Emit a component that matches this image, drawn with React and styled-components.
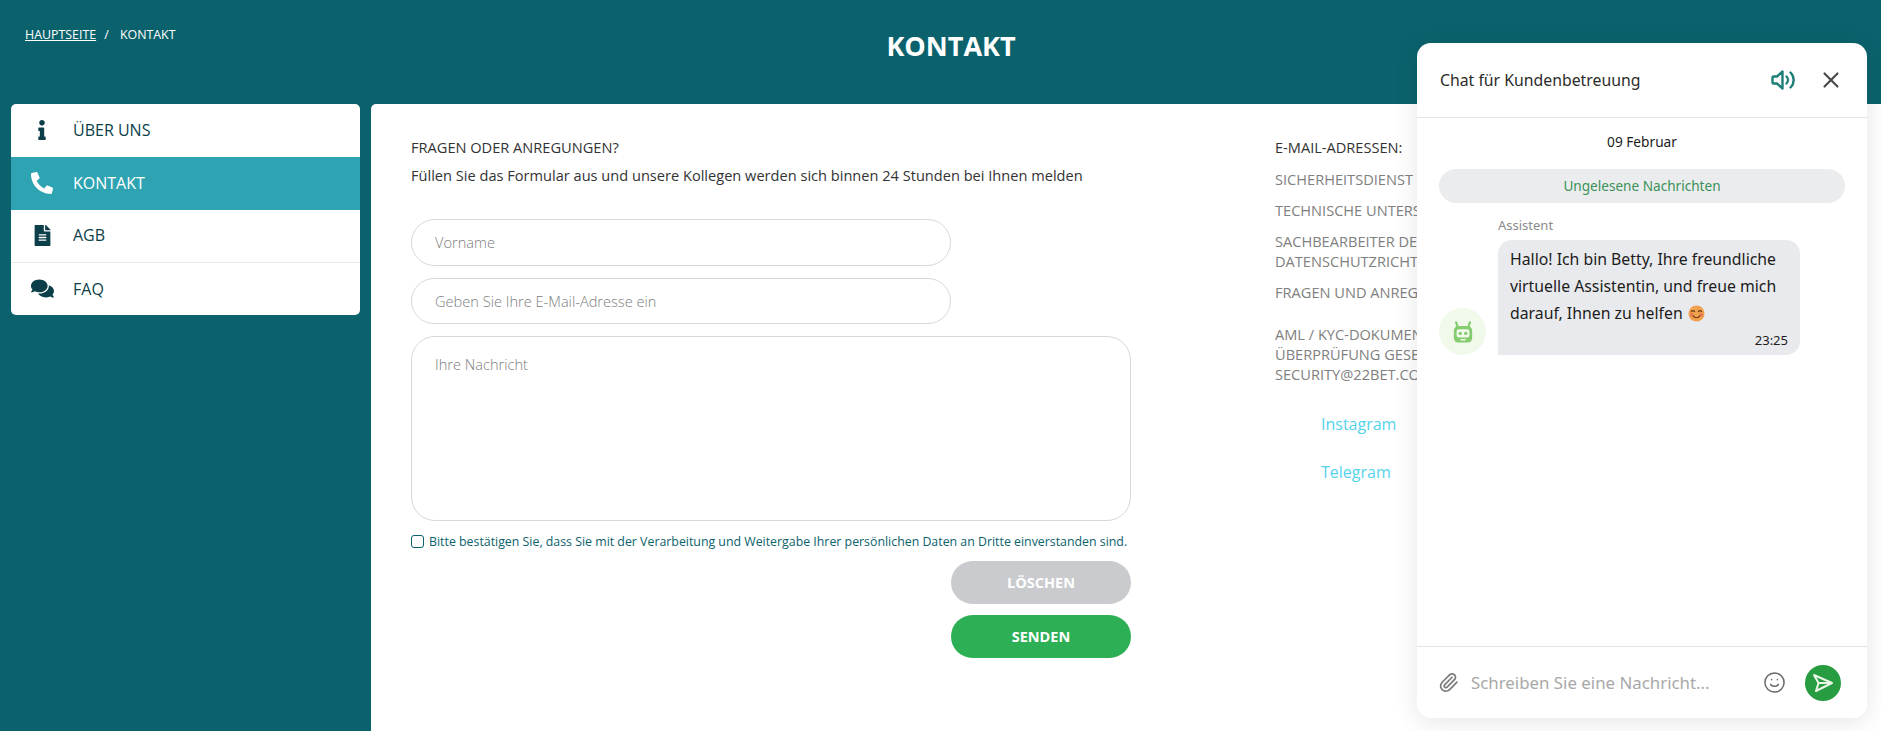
import styled, { createGlobalStyle } from 'styled-components';
import { FaInfo, FaPhone, FaFileAlt, FaComments } from 'react-icons/fa';
import { X, Paperclip, Smile } from 'lucide-react';

const GlobalStyle = createGlobalStyle`
  html, body {
    margin: 0;
    height: 100%;
    overflow: hidden;
    background: #0b626c;
    font-family: "Open Sans", "Liberation Sans", sans-serif;
  }
  * { box-sizing: border-box; }
`;

const Page = styled.div`
  position: relative;
  width: 100%;
  height: 731px;
  overflow: hidden;
  background: #0b626c;
`;

const Header = styled.header`
  display: grid;
  grid-template-columns: 1fr auto 1fr;
  height: 104px;
  padding: 25px 25px 0;
`;

const Crumbs = styled.nav`
  display: flex;
  gap: 8px;
  padding-top: 1px;
  font-size: 12.4px;
  line-height: 18px;
  color: #fff;
`;

const CrumbLink = styled.a`
  color: #fff;
  text-decoration: underline;
`;

const PageTitle = styled.h1`
  margin: 3px 0 0 21px;
  font-size: 27px;
  line-height: 36px;
  font-weight: 700;
  color: #fff;
`;

const Body = styled.div`
  display: flex;
  gap: 11px;
  padding-left: 11px;
  height: 627px;
`;

const SideMenu = styled.ul`
  flex: none;
  width: 349px;
  height: 211px;
  margin: 0;
  padding: 0;
  list-style: none;
  background: #fff;
  border-radius: 5px;
  overflow: hidden;
`;

const MenuItem = styled.li`
  display: flex;
  align-items: center;
  height: 53px;
  padding-bottom: 2px;
  font-size: 16px;
  color: ${p => (p.$active ? '#fff' : '#0c3f4a')};
  background: ${p => (p.$active ? '#2ea4b2' : 'transparent')};
  border-bottom: ${p => (p.$line ? '1px solid #e8e8e8' : 'none')};
`;

const MenuIcon = styled.span`
  display: flex;
  justify-content: center;
  width: 62px;
`;

const Content = styled.main`
  flex: 1;
  display: flex;
  padding: 33px 0 0 40px;
  background: #fff;
  border-radius: 5px 0 0 0;
`;

const FormColumn = styled.form`
  display: flex;
  flex-direction: column;
  flex: none;
  width: 720px;
`;

const FormTitle = styled.div`
  font-size: 14.6px;
  line-height: 20px;
  color: #333;
`;

const FormText = styled.div`
  margin: 8px 0 34px;
  font-size: 14.6px;
  line-height: 20px;
  color: #333;
`;

const TextInput = styled.input`
  display: block;
  width: 540px;
  height: 46.5px;
  margin-bottom: 12px;
  padding: 0 23px;
  border: 1px solid #d8d8d8;
  border-radius: 24px;
  font: 300 14.6px "Open Sans", sans-serif;
  outline: none;
  &::placeholder { color: #7c7c7c; }
`;

const MessageInput = styled.textarea`
  display: block;
  width: 720px;
  height: 185px;
  padding: 17px 23px;
  border: 1px solid #d8d8d8;
  border-radius: 24px;
  font: 300 14.6px/20px "Open Sans", sans-serif;
  outline: none;
  resize: none;
  &::placeholder { color: #7c7c7c; }
`;

const Consent = styled.label`
  display: flex;
  align-items: center;
  gap: 5px;
  margin: 11px 0 11px;
  height: 18px;
  font-size: 12.35px;
  white-space: nowrap;
  color: #0b626c;
`;

const ConsentBox = styled.span`
  flex: none;
  width: 13px;
  height: 13px;
  border: 1px solid #0b626c;
  border-radius: 3px;
`;

const PillButton = styled.button`
  display: block;
  align-self: flex-end;
  width: 180px;
  height: 43px;
  margin-bottom: 11px;
  border: none;
  border-radius: 22px;
  font: 700 14.5px "Open Sans", sans-serif;
  color: #fff;
  background: ${p => (p.$primary ? '#2daf56' : '#c9cbce')};
`;

const InfoColumn = styled.aside`
  flex: none;
  width: 500px;
  margin-left: 144px;
  font-size: 14.6px;
  color: #808080;
`;

const InfoTitle = styled.div`
  margin-bottom: 12px;
  line-height: 20px;
  color: #333;
`;

const InfoLine = styled.div`
  margin-bottom: ${p => p.$gap || 11}px;
  line-height: 20px;
`;

const SocialLink = styled.a`
  display: block;
  margin: 0 0 25px 46px;
  font-size: 16px;
  line-height: 23px;
  color: #55d3ec;
`;

const ChatPanel = styled.section`
  position: absolute;
  top: 43px;
  left: 1417px;
  display: flex;
  flex-direction: column;
  width: 450px;
  height: 675px;
  background: #fff;
  border-radius: 14px;
  box-shadow: 0 4px 24px rgba(0, 0, 0, 0.1);
  font-family: "Noto Sans", "Open Sans", sans-serif;
`;

const ChatHeader = styled.div`
  flex: none;
  display: flex;
  align-items: center;
  height: 75px;
  padding: 0 23px;
  border-bottom: 1px solid #e2e3e5;
`;

const ChatTitle = styled.div`
  flex: 1;
  font-size: 15.8px;
  color: #2b2b2b;
`;

const SoundButton = styled.span`
  display: flex;
  margin-right: 23px;
`;

const CloseButton = styled.span`
  display: flex;
  color: #4a4a4a;
`;

const ChatScroll = styled.div`
  flex: 1;
  padding: 14px 22px 0;
`;

const ChatDate = styled.div`
  text-align: center;
  font-size: 13.7px;
  line-height: 20px;
  color: #1b1b1b;
`;

const UnreadBar = styled.div`
  height: 34px;
  margin: 17px 0 13px;
  border-radius: 17px;
  background: #ebecee;
  text-align: center;
  font-size: 13.6px;
  line-height: 34px;
  color: #3c9158;
`;

const MessageRow = styled.div`
  display: flex;
  align-items: flex-end;
  gap: 12px;
`;

const BotAvatar = styled.div`
  flex: none;
  display: flex;
  align-items: center;
  justify-content: center;
  width: 47px;
  height: 47px;
  border-radius: 50%;
  background: #f0f9ea;
`;

const SenderName = styled.div`
  margin-bottom: 6px;
  font-size: 13px;
  line-height: 18px;
  color: #8b8b8b;
`;

const Bubble = styled.div`
  width: 302px;
  padding: 6px 12px 6px;
  border-radius: 14px 14px 14px 0;
  background: #e9eaed;
  font-size: 15.8px;
  line-height: 27px;
  color: #1c1c1c;
`;

const BubbleTime = styled.div`
  margin-top: 4px;
  text-align: right;
  font-size: 13px;
  line-height: 18px;
`;

const Composer = styled.div`
  flex: none;
  display: flex;
  align-items: center;
  height: 72px;
  padding: 0 26px 0 21px;
  border-top: 1px solid #e2e3e5;
`;

const AttachIcon = styled.span`
  display: flex;
  color: #7c7c7c;
  margin-right: 12px;
`;

const ComposerText = styled.div`
  flex: 1;
  font-size: 16.85px;
  color: #a8a8a8;
`;

const EmojiIcon = styled.span`
  display: flex;
  color: #6a6a6a;
  margin-right: 19px;
`;

const SendButton = styled.span`
  display: flex;
  align-items: center;
  justify-content: center;
  width: 36px;
  height: 36px;
  border-radius: 50%;
  background: #279c40;
`;

// speaker with a rounded outline and two sound arcs
const SoundIcon = () => (
  <svg width="24" height="22" viewBox="0 0 24 22" fill="none" stroke="#1f7f78" strokeWidth="2.4" strokeLinecap="round" strokeLinejoin="round">
    <path d="M11.5 2.5v17L6 14.5H2.5a1 1 0 0 1-1-1v-5a1 1 0 0 1 1-1H6l5.5-5Z" />
    <path d="M15.5 7.5a5 5 0 0 1 0 7M19.5 3.5a10.5 10.5 0 0 1 0 15" />
  </svg>
);

const BotIcon = () => (
  <svg width="22" height="24" viewBox="0 0 24 26" fill="none">
    <path d="M6 7 4.5 2.5M18 7l1.5-4.5" stroke="#84cc6e" strokeWidth="2.4" strokeLinecap="round" />
    <rect x="2" y="6.5" width="20" height="18" rx="5" fill="#84cc6e" />
    <rect x="5" y="10" width="14" height="9" rx="2.5" fill="#f0f9ea" />
    <circle cx="9" cy="14.5" r="1.8" fill="#84cc6e" />
    <circle cx="15" cy="14.5" r="1.8" fill="#84cc6e" />
    <rect x="9" y="20.5" width="6" height="1.8" rx="0.9" fill="#f0f9ea" />
  </svg>
);

const SendIcon = () => (
  <svg width="22" height="20" viewBox="0 0 22 20" fill="none">
    <path d="M2 2 20 10 4 18l2.5-8L2 2ZM6.5 10H20" stroke="#eaf7e6" strokeWidth="2" strokeLinejoin="round" />
  </svg>
);

const BlushEmoji = () => (
  <svg width="17" height="17" viewBox="0 0 18 18" style={{ marginLeft: 5, verticalAlign: -3 }}>
    <circle cx="9" cy="9" r="8.5" fill="#f0a24e" />
    <circle cx="4" cy="10.5" r="2" fill="#e9795a" />
    <circle cx="14" cy="10.5" r="2" fill="#e9795a" />
    <path d="M3.5 7c1-1.4 2.6-1.4 3.4 0M11 7c1-1.4 2.6-1.4 3.4 0M5.5 11.5c1.8 2.6 5.2 2.6 7 0" stroke="#6b3a12" strokeWidth="1.2" fill="none" strokeLinecap="round" />
  </svg>
);

const menu = [
  { label: 'ÜBER UNS', icon: <FaInfo size={20} /> },
  { label: 'KONTAKT', icon: <FaPhone size={22} style={{ transform: 'scaleX(-1)' }} />, active: true },
  { label: 'AGB', icon: <FaFileAlt size={21} />, line: true },
  { label: 'FAQ', icon: <FaComments size={23} /> },
];

const App = () => (
  <Page>
    <GlobalStyle />
    <Header>
      <Crumbs>
        <CrumbLink>HAUPTSEITE</CrumbLink>
        <span>/</span>
        <span>&nbsp;KONTAKT</span>
      </Crumbs>
      <PageTitle>KONTAKT</PageTitle>
    </Header>

    <Body>
      <SideMenu>
        {menu.map(item => (
          <MenuItem key={item.label} $active={item.active} $line={item.line}>
            <MenuIcon>{item.icon}</MenuIcon>
            {item.label}
          </MenuItem>
        ))}
      </SideMenu>

      <Content>
        <FormColumn>
          <FormTitle>FRAGEN ODER ANREGUNGEN?</FormTitle>
          <FormText>Füllen Sie das Formular aus und unsere Kollegen werden sich binnen 24 Stunden bei Ihnen melden</FormText>
          <TextInput placeholder="Vorname" />
          <TextInput placeholder="Geben Sie Ihre E-Mail-Adresse ein" />
          <MessageInput placeholder="Ihre Nachricht" />
          <Consent>
            <ConsentBox />
            Bitte bestätigen Sie, dass Sie mit der Verarbeitung und Weitergabe Ihrer persönlichen Daten an Dritte einverstanden sind.
          </Consent>
          <PillButton type="button">LÖSCHEN</PillButton>
          <PillButton type="button" $primary>SENDEN</PillButton>
        </FormColumn>

        <InfoColumn>
          <InfoTitle>E-MAIL-ADRESSEN:</InfoTitle>
          <InfoLine>SICHERHEITSDIENST</InfoLine>
          <InfoLine>TECHNISCHE UNTERSTÜTZUNG</InfoLine>
          <InfoLine>SACHBEARBEITER DES<br />DATENSCHUTZRICHTLINIEN</InfoLine>
          <InfoLine $gap={22}>FRAGEN UND ANREGUNGEN</InfoLine>
          <InfoLine $gap={29}>AML / KYC-DOKUMENTE<br />ÜBERPRÜFUNG GESENDET<br />SECURITY@22BET.COM</InfoLine>
          <SocialLink>Instagram</SocialLink>
          <SocialLink>Telegram</SocialLink>
        </InfoColumn>
      </Content>
    </Body>

    <ChatPanel>
      <ChatHeader>
        <ChatTitle>Chat für Kundenbetreuung</ChatTitle>
        <SoundButton><SoundIcon /></SoundButton>
        <CloseButton><X size={26} strokeWidth={2} /></CloseButton>
      </ChatHeader>
      <ChatScroll>
        <ChatDate>09 Februar</ChatDate>
        <UnreadBar>Ungelesene Nachrichten</UnreadBar>
        <MessageRow>
          <BotAvatar><BotIcon /></BotAvatar>
          <div>
            <SenderName>Assistent</SenderName>
            <Bubble>
              Hallo! Ich bin Betty, Ihre freundliche virtuelle Assistentin, und freue mich darauf, Ihnen zu helfen
              <BlushEmoji />
              <BubbleTime>23:25</BubbleTime>
            </Bubble>
          </div>
        </MessageRow>
      </ChatScroll>
      <Composer>
        <AttachIcon><Paperclip size={21} /></AttachIcon>
        <ComposerText>Schreiben Sie eine Nachricht...</ComposerText>
        <EmojiIcon><Smile size={23} strokeWidth={1.6} /></EmojiIcon>
        <SendButton><SendIcon /></SendButton>
      </Composer>
    </ChatPanel>
  </Page>
);

export default App;
